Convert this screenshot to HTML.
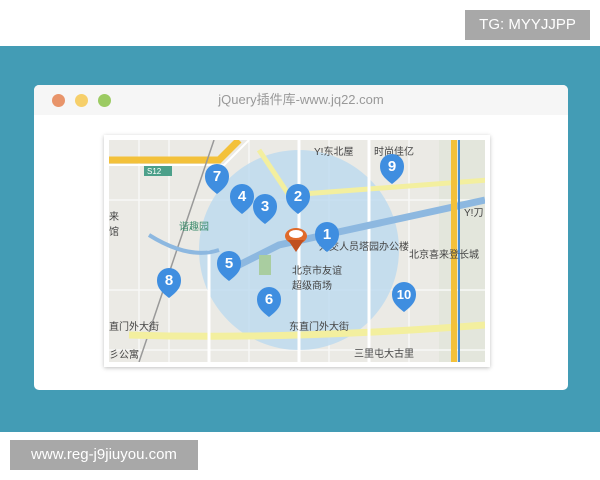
<!DOCTYPE html>
<html><head><meta charset="utf-8"><style>
body{margin:0;width:600px;height:480px;background:#fff;position:relative;overflow:hidden;font-family:"Liberation Sans","Noto Sans CJK SC",sans-serif}
.band{position:absolute;left:0;top:46px;width:600px;height:386px;background:#439cb5}
.tg{position:absolute;left:465px;top:10px;width:125px;height:30px;background:#a8a8a8;color:#fff;font-size:15px;line-height:30px;text-align:center}
.bl{position:absolute;left:10px;top:440px;width:188px;height:30px;background:#a8a8a8;color:#fff;font-size:15px;line-height:30px;text-align:center}
.win{position:absolute;left:34px;top:85px;width:534px;height:305px;background:#fff;border-radius:5px}
.tb{height:30px;background:#f6f6f6;border-radius:5px 5px 0 0;position:relative;color:#999;font-size:13px;text-align:center;line-height:30px}
.d{position:absolute;top:9px;width:13px;height:13px;border-radius:50%}
.frame{position:absolute;left:70px;top:50px;width:386px;height:232px;background:#fff;box-shadow:0 1px 4px rgba(0,0,0,.25)}
svg{position:absolute;left:5px;top:5px}
</style></head><body>
<div class="tg">TG: MYYJJPP</div>
<div class="band"></div>
<div class="win">
<div class="tb"><div class="d" style="left:18px;background:#e8946a"></div><div class="d" style="left:41px;background:#f6cf6a"></div><div class="d" style="left:64px;background:#9ccb63"></div>jQuery插件库-www.jq22.com</div>
<div class="frame">
<svg width="376" height="222" viewBox="0 0 376 222" font-family="Liberation Sans,Noto Sans CJK SC,sans-serif">
<defs><g id="p"><path d="M0 16 C-9 9-12 5-12-2a12 12 0 0 1 24 0c0 7-3 11-12 18z"/></g></defs>
<rect width="376" height="222" fill="#ebeae5"/>
<rect x="330" y="0" width="46" height="222" fill="#e3e6dc"/>
<path d="M30 0 V222 M60 0 V222 M140 0 V222 M220 0 V222 M300 0 V222 M0 60 H376 M0 150 H376 M0 210 H376" stroke="#f8f8f6" stroke-width="1.5" fill="none"/>
<circle cx="190" cy="110" r="100" fill="#bcd9ef" opacity=".8"/>
<path d="M0 20 L110 20 L130 0" stroke="#f3c13a" stroke-width="7" fill="none"/>
<path d="M0 25 L115 25 L140 0" stroke="#fff" stroke-width="2" fill="none"/>
<path d="M105 0 L30 222" stroke="#999" stroke-width="1.5"/>
<path d="M150 10 L180 55 L380 40" stroke="#f3ef9f" stroke-width="5" fill="none"/>
<path d="M20 195 Q180 200 376 185" stroke="#f3ef9f" stroke-width="7" fill="none"/>
<path d="M100 110 L100 222 M190 0 L190 222 M260 0 L260 222" stroke="#fff" stroke-width="3" fill="none"/>
<path d="M120 130 L170 105 L376 60" stroke="#8db8e0" stroke-width="7" fill="none"/>
<path d="M40 95 Q80 120 110 110" stroke="#8db8e0" stroke-width="4" fill="none"/>
<rect x="342" y="0" width="6" height="222" fill="#f3c13a"/>
<rect x="349" y="0" width="2" height="222" fill="#4a8ed0"/>
<rect x="150" y="115" width="12" height="20" fill="#a9cda0"/>
<rect x="35" y="26" width="28" height="10" fill="#4ca08a"/><text x="38" y="34" font-size="8" fill="#fff">S12</text>
<g font-size="10" fill="#444">
<text x="205" y="15">Y!东北屋</text><text x="265" y="15">时尚佳亿</text>
<text x="210" y="110">外交人员塔园办公楼</text><text x="300" y="118">北京喜来登长城</text>
<text x="183" y="134">北京市友谊</text><text x="183" y="149">超级商场</text>
<text x="180" y="190">东直门外大街</text><text x="0" y="190">直门外大街</text>
<text x="245" y="217">三里屯大古里</text><text x="0" y="218">彡公寓</text><text x="0" y="80">来</text><text x="0" y="95">馆</text>
<text x="70" y="90" fill="#3a8a6a">谐趣园</text><text x="355" y="76">Y!刀</text>
</g>
<g fill="#3f8ee0" font-size="15" font-weight="bold">
<g transform="translate(108,38)"><use href="#p"/><text x="0" y="3" text-anchor="middle" fill="#fff">7</text></g>
<g transform="translate(133,58)"><use href="#p"/><text x="0" y="3" text-anchor="middle" fill="#fff">4</text></g>
<g transform="translate(156,68)"><use href="#p"/><text x="0" y="3" text-anchor="middle" fill="#fff">3</text></g>
<g transform="translate(189,58)"><use href="#p"/><text x="0" y="3" text-anchor="middle" fill="#fff">2</text></g>
<g transform="translate(218,96)"><use href="#p"/><text x="0" y="3" text-anchor="middle" fill="#fff">1</text></g>
<g transform="translate(283,28)"><use href="#p"/><text x="0" y="3" text-anchor="middle" fill="#fff">9</text></g>
<g transform="translate(120,125)"><use href="#p"/><text x="0" y="3" text-anchor="middle" fill="#fff">5</text></g>
<g transform="translate(60,142)"><use href="#p"/><text x="0" y="3" text-anchor="middle" fill="#fff">8</text></g>
<g transform="translate(160,161)"><use href="#p"/><text x="0" y="3" text-anchor="middle" fill="#fff">6</text></g>
<g transform="translate(295,156)"><use href="#p"/><text x="0" y="3" text-anchor="middle" fill="#fff" font-size="13">10</text></g>
</g>
<g transform="translate(187,96)"><ellipse cx="0" cy="0" rx="11" ry="8" fill="#e06a2a"/><ellipse cx="0" cy="-2" rx="7" ry="4" fill="#fff"/><path d="M-8 4 L0 16 L8 4z" fill="#c05020"/></g>
</svg>
</div>
</div>
<div class="bl">www.reg-j9jiuyou.com</div>
</body></html>
